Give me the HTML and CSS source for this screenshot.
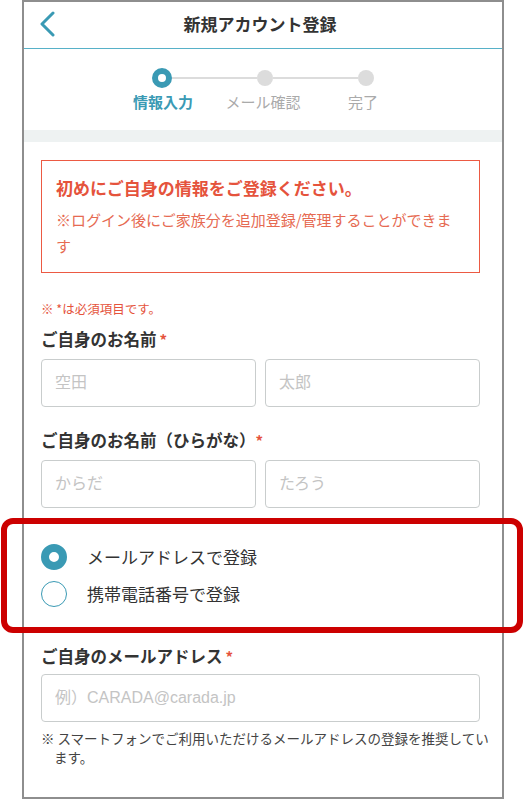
FILE: index.html
```html
<!DOCTYPE html>
<html lang="ja">
<head>
<meta charset="utf-8">
<title>新規アカウント登録</title>
<link rel="stylesheet" href="styles.css">
</head>
<body>
<div class="frame">
  <header class="header">
    <svg class="back" width="20" height="28" viewBox="0 0 20 28"><polyline points="15,2 4,13 15,24" fill="none" stroke="#3a9ab4" stroke-width="3" stroke-linecap="round" stroke-linejoin="round"/></svg>
    <h1 class="title">新規アカウント登録</h1>
    <span></span>
  </header>
  <div class="stepper">
    <div class="track">
      <span class="dot dot-active"></span>
      <span class="line"></span>
      <span class="dot"></span>
      <span class="line"></span>
      <span class="dot"></span>
    </div>
    <div class="step-labels">
      <span class="step-label active">情報入力</span>
      <span class="step-label">メール確認</span>
      <span class="step-label">完了</span>
    </div>
  </div>
  <div class="band"></div>
  <main class="content">
    <div class="notice">
      <p class="notice-title">初めにご自身の情報をご登録ください。</p>
      <p class="notice-sub">※ログイン後にご家族分を追加登録/管理することができます</p>
    </div>
    <p class="required-note">※ *は必須項目です。</p>
    <label class="field-label">ご自身のお名前<span class="req">*</span></label>
    <div class="pair">
      <input class="input" type="text" placeholder="空田">
      <input class="input" type="text" placeholder="太郎">
    </div>
    <label class="field-label label-2">ご自身のお名前（ひらがな）<span class="req req-tight">*</span></label>
    <div class="pair">
      <input class="input" type="text" placeholder="からだ">
      <input class="input" type="text" placeholder="たろう">
    </div>
    <div class="radios">
      <div class="radio-row"><span class="radio radio-on"></span><span class="radio-text">メールアドレスで登録</span></div>
      <div class="radio-row"><span class="radio"></span><span class="radio-text">携帯電話番号で登録</span></div>
    </div>
    <label class="field-label label-3">ご自身のメールアドレス<span class="req">*</span></label>
    <input class="input input-full" type="text" placeholder="例）CARADA@carada.jp">
    <p class="mail-note">※ スマートフォンでご利用いただけるメールアドレスの登録を推奨してい<br>ます。</p>
  </main>
</div>
<div class="highlight"></div>
</body>
</html>
```
FILE: styles.css
```css
* { box-sizing: border-box; }
html, body { margin: 0; padding: 0; }
body {
  position: relative;
  width: 524px;
  height: 800px;
  background: #fff;
  font-family: "Noto Sans CJK JP", "Noto Sans", sans-serif;
  color: #333;
  overflow: hidden;
}
p { margin: 0; }
.frame {
  margin-left: 22px;
  width: 482px;
  height: 799px;
  border: 2px solid #8e8e8e;
  background: #fff;
  overflow: hidden;
}
.header {
  height: 47px;
  display: grid;
  grid-template-columns: 40px 1fr 40px;
  align-items: center;
  border-bottom: 1px solid #57b1c8;
}
.back { margin-left: 14px; margin-top: -1px; }
.title {
  margin: 0;
  text-align: center;
  font-size: 17px;
  font-weight: 700;
  color: #333;
  line-height: 24px;
  padding-right: 6px;
  margin-top: -2px;
}
.stepper { padding: 19px 0 18px; }
.track {
  width: 222px;
  margin: 0 auto;
  display: flex;
  align-items: center;
  height: 20px;
}
.dot {
  width: 16px;
  height: 16px;
  border-radius: 50%;
  background: #dcdcdc;
  flex: none;
}
.dot-active {
  width: 20px;
  height: 20px;
  background: #fff;
  border: 6px solid #3a9ab4;
}
.line { flex: 1; height: 2px; background: #dcdcdc; }
.step-labels {
  display: grid;
  grid-template-columns: repeat(3, 100px);
  justify-content: center;
  margin-top: 4px;
}
.step-label {
  text-align: center;
  font-size: 15px;
  line-height: 20px;
  color: #aaa;
}
.step-label.active { color: #3a9ab4; font-weight: 700; }
.band { height: 12px; background: #eef2f2; }
.content { padding: 18px 22px 0 17px; }
.notice {
  border: 1.5px solid #ec5a43;
  padding: 14px 14px 13px;
  height: 113px;
}
.notice-title {
  font-size: 17px;
  font-weight: 700;
  line-height: 26px;
  color: #e5533c;
}
.notice-sub {
  margin-top: 6px;
  font-size: 15px;
  line-height: 26px;
  color: #e66a52;
}
.required-note {
  margin-top: 27px;
  font-size: 12.5px;
  line-height: 18px;
  color: #e5533c;
}
.field-label {
  display: block;
  margin-top: 9px;
  font-size: 16.5px;
  line-height: 24px;
  font-weight: 700;
  color: #333;
}
.req { color: #e5533c; margin-left: 3px; font-size: 15px; }
.req-tight { margin-left: 0; }
.label-2 { margin-top: 21px; }
.label-3 { margin-top: 37px; }
.pair {
  margin-top: 7px;
  display: grid;
  grid-template-columns: 1fr 1fr;
  gap: 9px;
}
.input {
  display: block;
  width: 100%;
  height: 48px;
  border: 1px solid #c9cdcd;
  border-radius: 4px;
  padding: 0 13px;
  font-family: "Liberation Sans", "Noto Sans CJK JP", sans-serif;
  font-size: 16px;
  color: #333;
  background: #fff;
  outline: none;
}
.input::placeholder { color: #c4c4c4; }
.input-full { margin-top: 5px; }
.radios { margin-top: 36px; display: flex; flex-direction: column; gap: 11px; }
.radio-row { display: flex; align-items: center; height: 26px; }
.radio {
  width: 26px;
  height: 26px;
  border-radius: 50%;
  border: 1.5px solid #3a9ab4;
  background: #fff;
  flex: none;
}
.radio-on { border: 8px solid #3a9ab4; }
.radio-text {
  margin-left: 20px;
  font-size: 17px;
  line-height: 24px;
  color: #333;
}
.mail-note {
  margin-top: 7px;
  margin-right: -20px;
  padding-left: 13px;
  text-indent: -13px;
  font-size: 13.5px;
  line-height: 19px;
  color: #444;
}
.highlight {
  position: absolute;
  left: 1px;
  top: 518px;
  width: 522px;
  height: 115px;
  border: 6px solid #cc0000;
  border-radius: 12px;
  pointer-events: none;
}
```
